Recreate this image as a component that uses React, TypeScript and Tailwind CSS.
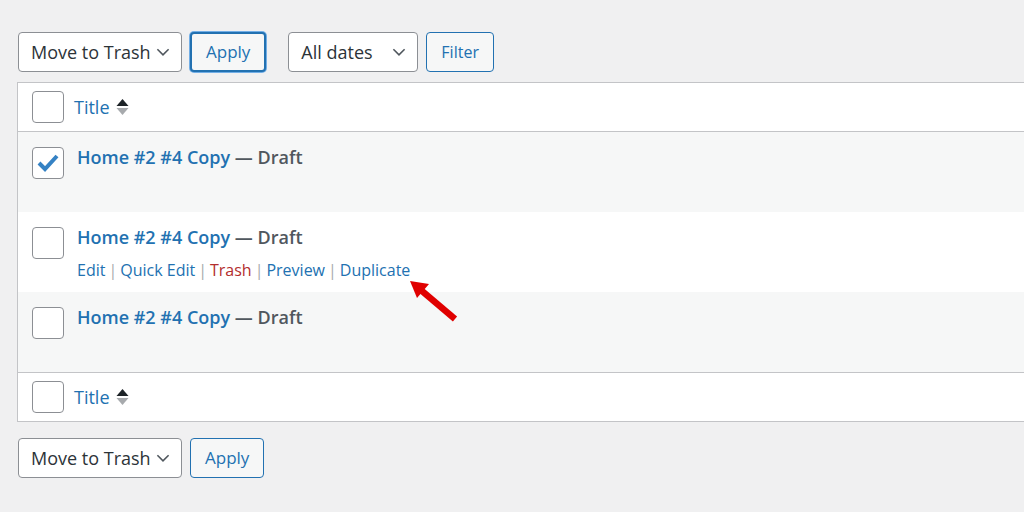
import React from 'react';

const font = "font-['Open_Sans','Liberation_Sans',sans-serif]";

const Chevron = () => (
    <svg width="16" height="16" viewBox="0 0 20 20" className="text-[#50575e]">
        <path d="M3 6.5 L10 13.5 L17 6.5" fill="none" stroke="currentColor" strokeWidth="2" />
    </svg>
);

const Select = ({ label, width }: { label: string; width: string }) => (
    <div className={`h-10 ${width} flex items-center justify-between pl-3 pr-[10px] bg-white border border-[#8c8f94] rounded-[4px] text-[18px] text-[#2c3338]`}>
        <span>{label}</span>
        <Chevron />
    </div>
);

const Button = ({ label, focused, small }: { label: string; focused?: boolean; small?: boolean }) => (
    <div
        className={`h-10 flex items-center justify-center px-[14px] bg-[#f6f7f7] text-[#2271b1] rounded-[4px] ${
            focused ? 'border-2 border-[#2271b1] shadow-[0_0_0_1px_#72aee6]' : 'border border-[#2271b1]'
        } ${small ? 'text-[16px]' : 'text-[17px]'}`}
    >
        {label}
    </div>
);

const Checkbox = ({ checked }: { checked?: boolean }) => (
    <div className="w-8 h-8 shrink-0 bg-white border border-[#8c8f94] rounded-[4px] flex items-center justify-center">
        {checked && (
            <svg width="26" height="26" viewBox="0 0 26 26">
                <path d="M4 13 L10 19 L22 6" fill="none" stroke="#3582c4" strokeWidth="4" strokeLinejoin="miter" />
            </svg>
        )}
    </div>
);

const SortArrows = () => (
    <svg width="13" height="20" viewBox="0 0 13 20" className="ml-[6px]">
        <path d="M0.5 9 L6.5 2 L12.5 9 Z" fill="#1d2327" />
        <path d="M0.5 11 L6.5 18 L12.5 11 Z" fill="#a7aaad" />
    </svg>
);

const TitleCell = () => (
    <div className="flex items-center h-12 pl-[14px] gap-[10px] bg-white">
        <Checkbox />
        <span className="text-[18px] text-[#2271b1] flex items-center">
            Title
            <SortArrows />
        </span>
    </div>
);

const Sep = () => <span className="text-[#a7aaad] mx-[3px]">|</span>;

const PostRow = ({ gray, checked, actions }: { gray?: boolean; checked?: boolean; actions?: boolean }) => (
    <div className={`h-20 flex items-start pl-[14px] pt-[15px] gap-[13px] ${gray ? 'bg-[#f6f7f7]' : 'bg-white'}`}>
        <Checkbox checked={checked} />
        <div className="flex flex-col">
            <div className="text-[18px] font-semibold leading-[20px]">
                <span className="text-[#2271b1]">Home #2 #4 Copy</span>
                <span className="text-[#50575e]"> — Draft</span>
            </div>
            {actions && (
                <div className="text-[16px] mt-[13px] leading-[20px] flex items-center">
                    <span className="text-[#2271b1]">Edit</span>
                    <Sep />
                    <span className="text-[#2271b1]">Quick Edit</span>
                    <Sep />
                    <span className="text-[#b32d2e]">Trash</span>
                    <Sep />
                    <span className="text-[#2271b1]">Preview</span>
                    <Sep />
                    <span className="text-[#2271b1]">Duplicate</span>
                </div>
            )}
        </div>
    </div>
);

export default function App() {
    return (
        <div className={`${font} w-[1024px] h-[512px] bg-[#f0f0f1] overflow-hidden relative`}>
            <div className="flex items-center pt-8 pl-[18px]">
                <Select label="Move to Trash" width="w-[164px]" />
                <div className="ml-2">
                    <Button label="Apply" focused />
                </div>
                <div className="ml-[22px]">
                    <Select label="All dates" width="w-[130px]" />
                </div>
                <div className="ml-2">
                    <Button label="Filter" small />
                </div>
            </div>

            <div className="mt-[10px] ml-[17px] border-l border-y border-[#c3c4c7]">
                <div className="border-b border-[#c3c4c7]">
                    <TitleCell />
                </div>
                <PostRow gray checked />
                <PostRow actions />
                <PostRow gray />
                <div className="border-t border-[#c3c4c7]">
                    <TitleCell />
                </div>
            </div>

            <div className="flex items-center mt-4 pl-[18px]">
                <Select label="Move to Trash" width="w-[164px]" />
                <div className="ml-2">
                    <Button label="Apply" />
                </div>
            </div>

            <svg className="absolute left-[404px] top-[276px]" width="60" height="50" viewBox="0 0 60 50">
                <path d="M51 43 L18 15" stroke="#e00000" strokeWidth="6.5" fill="none" />
                <path d="M6 5 L25 8 L13 22 Z" fill="#e00000" />
            </svg>
        </div>
    );
}
